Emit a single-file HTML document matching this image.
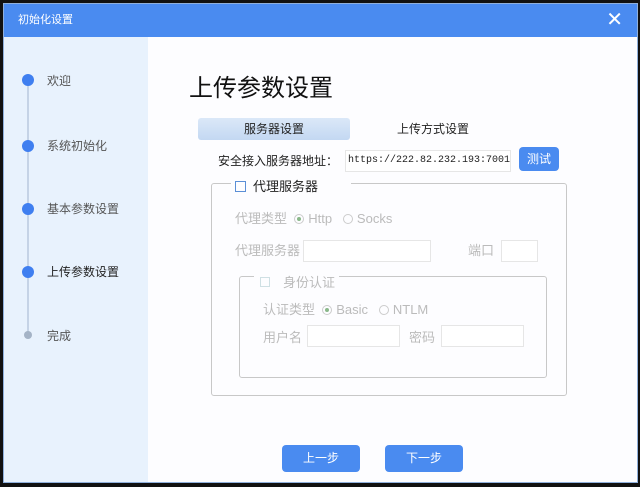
<!DOCTYPE html>
<html><head><meta charset="utf-8"><style>
*{margin:0;padding:0;box-sizing:border-box}
body{width:640px;height:487px;background:#111;position:relative;overflow:hidden;font-family:"Liberation Sans","Noto Sans CJK SC",sans-serif}
.win{position:absolute;left:3px;top:3px;width:635px;height:480px;background:#fdfdff;border:1px solid #8fb0dc}
.title{position:absolute;left:0;top:0;width:100%;height:33px;background:#4a8bf0;color:#fff;font-size:11px;line-height:33px;padding-left:14px}
.x{position:absolute;right:14px;top:0;font-size:20px;line-height:33px;color:#fff}
.side{position:absolute;left:0;top:33px;width:144px;bottom:0;background:#e8f2fd}
.line{position:absolute;left:23px;top:46px;width:2px;height:254px;background:#c5d3e6}
.dot{position:absolute;left:18px;width:12px;height:12px;border-radius:50%;background:#3f7ff0}
.lab{position:absolute;left:43px;font-size:12px;color:#555;line-height:14px}
.a{position:absolute;font-size:12px;color:#222;line-height:14px}
.g{color:#bbb}
.inp{position:absolute;border:1px solid #e6e6e6;background:#fff}
.btn{position:absolute;background:#4a8bf0;color:#fff;font-size:12px;text-align:center;border-radius:4px}
.rad{display:inline-block;width:10px;height:10px;border:1px solid #ccc;border-radius:50%;vertical-align:-1px;margin-right:4px;position:relative}
.rad.on::after{content:"";position:absolute;left:2px;top:2px;width:4px;height:4px;border-radius:50%;background:#8ab88a}
</style></head><body>
<div class="win">
<div class="title">初始化设置<span class="x">✕</span></div>
<div class="side">
<div class="line"></div>
<div class="dot" style="top:37px"></div><div class="lab" style="top:37px">欢迎</div>
<div class="dot" style="top:103px"></div><div class="lab" style="top:102px">系统初始化</div>
<div class="dot" style="top:166px"></div><div class="lab" style="top:165px">基本参数设置</div>
<div class="dot" style="top:229px"></div><div class="lab" style="top:228px;color:#222">上传参数设置</div>
<div class="dot" style="top:294px;left:20px;width:8px;height:8px;background:#a4b3c6"></div><div class="lab" style="top:292px">完成</div>
</div>
<div class="a" style="left:185px;top:71px;font-size:24px;line-height:28px;color:#111">上传参数设置</div>
<div style="position:absolute;left:194px;top:114px;width:152px;height:22px;background:linear-gradient(#dbe8f8,#c3d8f2);border-radius:3px"></div>
<div class="a" style="left:240px;top:118px">服务器设置</div>
<div class="a" style="left:393px;top:118px">上传方式设置</div>
<div class="a" style="left:214px;top:150px">安全接入服务器地址：</div>
<div class="inp" style="left:341px;top:146px;width:166px;height:22px;font-family:'Liberation Mono',monospace;font-size:10px;line-height:20px;padding-left:2px;color:#222;white-space:nowrap;overflow:hidden">https://222.82.232.193:7001</div>
<div class="btn" style="left:515px;top:143px;width:40px;height:24px;line-height:24px">测试</div>
<div style="position:absolute;left:207px;top:179px;width:356px;height:213px;border:1px solid #c8c8c8;border-radius:3px"></div>
<div style="position:absolute;left:227px;top:173px;width:120px;height:14px;background:#fdfdff"></div>
<div style="position:absolute;left:231px;top:177px;width:11px;height:11px;border:1px solid #5b8fd6"></div>
<div class="a" style="left:249px;top:176px;font-size:13px">代理服务器</div>
<div class="a g" style="left:231px;top:208px;font-size:13px">代理类型 &nbsp;<span class="rad on"></span>Http &nbsp; <span class="rad"></span>Socks</div>
<div class="a g" style="left:231px;top:240px;font-size:13px">代理服务器</div>
<div class="inp" style="left:299px;top:236px;width:128px;height:22px"></div>
<div class="a g" style="left:464px;top:240px;font-size:13px">端口</div>
<div class="inp" style="left:497px;top:236px;width:37px;height:22px"></div>
<div style="position:absolute;left:235px;top:272px;width:308px;height:102px;border:1px solid #c8c8c8;border-radius:3px"></div>
<div style="position:absolute;left:250px;top:266px;width:85px;height:12px;background:#fdfdff"></div>
<div style="position:absolute;left:256px;top:273px;width:10px;height:10px;border:1px solid #cfe0e4"></div>
<div class="a g" style="left:279px;top:272px;font-size:13px">身份认证</div>
<div class="a g" style="left:259px;top:299px;font-size:13px">认证类型 &nbsp;<span class="rad on"></span>Basic &nbsp; <span class="rad"></span>NTLM</div>
<div class="a g" style="left:259px;top:327px;font-size:13px">用户名</div>
<div class="inp" style="left:303px;top:321px;width:93px;height:22px"></div>
<div class="a g" style="left:405px;top:327px;font-size:13px">密码</div>
<div class="inp" style="left:437px;top:321px;width:83px;height:22px"></div>
<div class="btn" style="left:278px;top:441px;width:78px;height:27px;line-height:27px">上一步</div>
<div class="btn" style="left:381px;top:441px;width:78px;height:27px;line-height:27px">下一步</div>
</div>
</body></html>
